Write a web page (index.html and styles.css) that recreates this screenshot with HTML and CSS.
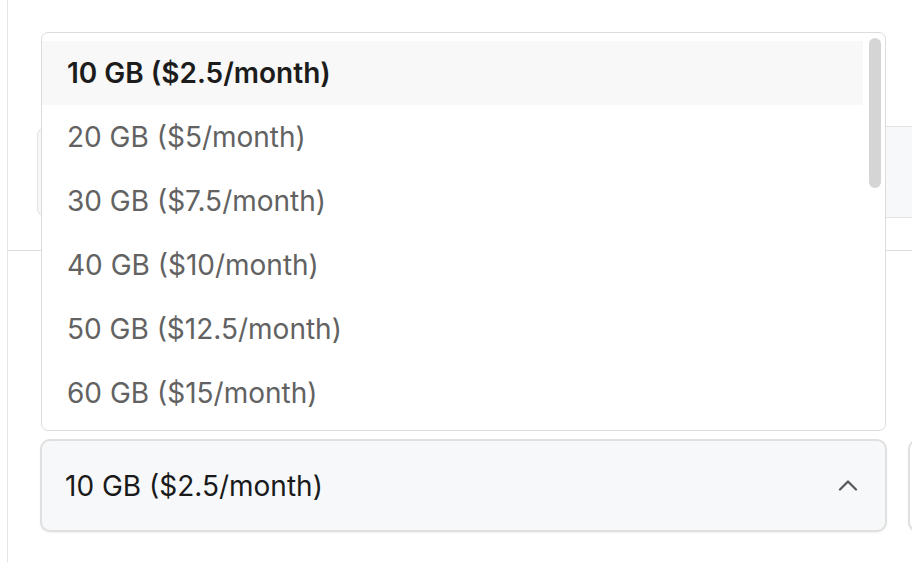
FILE: index.html
```html
<!DOCTYPE html>
<html lang="en">
<head>
    <meta charset="UTF-8">
    <meta name="viewport" content="width=device-width, initial-scale=1.0">
    <title>Storage plan</title>
    <link rel="stylesheet" href="styles.css">
</head>
<body>
    <div class="sheet">
        <section class="block block-top">
            <div class="input-box"></div>
        </section>

        <hr class="divider">

        <section class="block block-bottom">
            <div class="row">
                <div class="select-wrap">
                    <!-- open dropdown list -->
                    <div class="menu">
                        <ul class="options">
                            <li class="option active">10 GB ($2.5/month)</li>
                            <li class="option">20 GB ($5/month)</li>
                            <li class="option">30 GB ($7.5/month)</li>
                            <li class="option">40 GB ($10/month)</li>
                            <li class="option">50 GB ($12.5/month)</li>
                            <li class="option">60 GB ($15/month)</li>
                        </ul>
                        <div class="scroll-thumb"></div>
                    </div>

                    <button class="select" type="button">
                        <span>10 GB ($2.5/month)</span>
                        <svg class="chevron" width="20" height="12" viewBox="0 0 20 12" fill="none">
                            <path d="M2 10.5 L10 2.5 L18 10.5" stroke="#555" stroke-width="2.2" stroke-linecap="round" stroke-linejoin="round"/>
                        </svg>
                    </button>
                </div>
                <div class="select side"></div>
            </div>
        </section>
    </div>
</body>
</html>
```

FILE: styles.css
```css
body {
    margin: 0;
    padding: 0;
    background: #fff;
    font-family: Inter, "Noto Sans", Arial, sans-serif;
    overflow: hidden;
}

.sheet {
    margin-left: 7px;
    height: 562px;
    border-left: 1px solid #e4e4e4;
    width: 1000px;
}

.block-top {
    padding: 126px 0 0 29px;
    height: 250px;
    box-sizing: border-box;
}

.input-box {
    width: 900px;
    height: 92px;
    border: 1px solid #e2e2e2;
    border-radius: 10px;
    background: #f7f8fa;
    box-sizing: border-box;
}

.divider {
    margin: 0;
    border: none;
    border-top: 1px solid #dedede;
}

.block-bottom {
    padding: 188px 0 0 32px;
}

.row {
    display: flex;
    gap: 21px;
}

.select-wrap {
    position: relative;
    width: 847px;
    flex-shrink: 0;
}

.select {
    width: 100%;
    height: 93px;
    display: flex;
    align-items: center;
    justify-content: space-between;
    padding: 0 27px 0 23px;
    border: 2px solid #e0e0e0;
    border-radius: 10px;
    background: #f7f8fa;
    box-shadow: 0 1px 2px rgba(0, 0, 0, 0.06);
    font-family: inherit;
    font-size: 28px;
    color: #1a1a1a;
    box-sizing: border-box;
    cursor: pointer;
}

.select.side {
    width: 120px;
    flex-shrink: 0;
    background: #fff;
}

.chevron {
    margin-top: -2px;
}

/* dropdown list sits over the field above */
.menu {
    position: absolute;
    left: 1px;
    bottom: calc(100% + 8px);
    width: 845px;
    height: 399px;
    border: 1px solid #dcdcdc;
    border-radius: 7px;
    background: #fff;
    overflow: hidden;
    box-sizing: border-box;
    z-index: 2;
}

.options {
    list-style: none;
    margin: 0;
    padding: 8px 22px 0 0;
}

.option {
    height: 64px;
    line-height: 64px;
    padding-left: 25px;
    font-size: 28px;
    color: #626262;
}

.option.active {
    background: #f8f8f8;
    color: #1c1c1c;
    font-weight: 600;
}

.scroll-thumb {
    position: absolute;
    top: 5px;
    right: 4px;
    width: 12px;
    height: 150px;
    border-radius: 6px;
    background: #d5d5d5;
}
```
